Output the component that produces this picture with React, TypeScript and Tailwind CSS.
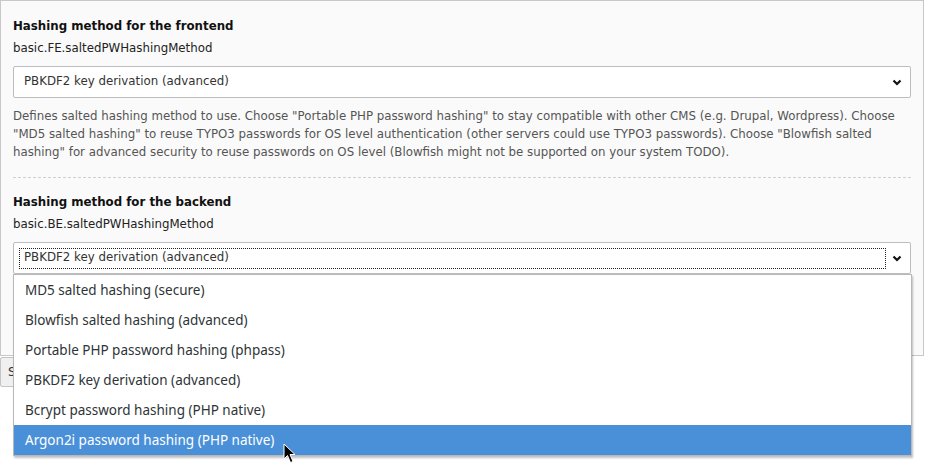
import React from "react";

const options = [
  "MD5 salted hashing (secure)",
  "Blowfish salted hashing (advanced)",
  "Portable PHP password hashing (phpass)",
  "PBKDF2 key derivation (advanced)",
  "Bcrypt password hashing (PHP native)",
  "Argon2i password hashing (PHP native)",
];

function Chevron() {
  return (
    <svg width="10" height="7" viewBox="0 0 10 7" className="shrink-0">
      <polyline points="1.5,1.5 5,5 8.5,1.5" fill="none" stroke="#111" strokeWidth="2.2" />
    </svg>
  );
}

function SelectBox({ focused }: { focused?: boolean }) {
  return (
    <div className="flex h-[32px] items-center justify-between rounded-[2px] border border-[#bdbdbd] bg-white pl-[6px] pr-[8px]">
      <div
        className={
          "flex h-[19px] flex-1 items-center pl-[4px] text-[11.8px] text-[#333] " +
          (focused ? "mr-[7px] outline-1 outline-dotted outline-[#222]" : "")
        }
      >
        PBKDF2 key derivation (advanced)
      </div>
      <Chevron />
    </div>
  );
}

function Field({ title, path, focused }: { title: string; path: string; focused?: boolean }) {
  return (
    <div>
      <h3 className="text-[11.8px] font-bold leading-[20px] text-[#111]">{title}</h3>
      <div className="mt-[3px] text-[11.8px] leading-[18px] text-[#222]">{path}</div>
      <div className="mt-[9px]">
        <SelectBox focused={focused} />
      </div>
    </div>
  );
}

export default function App() {
  return (
    <div className="relative h-[467px] w-[925px] overflow-hidden bg-white [font-family:'DejaVu_Sans',Verdana,sans-serif]">
      <div className="h-[356px] w-[924px] border border-[#c8c8c8] bg-[#fafafa] px-[12px] pt-[15px]">
        <div className="border-b border-dashed border-[#cfcfcf] pb-[16px]">
          <Field title="Hashing method for the frontend" path="basic.FE.saltedPWHashingMethod" />
          <p className="mt-[9px] text-[11.8px] leading-[18px] text-[#555]">
            Defines salted hashing method to use. Choose "Portable PHP password hashing" to stay compatible with other CMS (e.g. Drupal, Wordpress). Choose "MD5 salted hashing" to reuse TYPO3 passwords for OS level authentication (other servers could use TYPO3 passwords). Choose "Blowfish salted hashing" for advanced security to reuse passwords on OS level (Blowfish might not be supported on your system TODO).
          </p>
        </div>
        <div className="pt-[14px]">
          <Field title="Hashing method for the backend" path="basic.BE.saltedPWHashingMethod" focused />
        </div>
      </div>

      <button className="mt-[1px] h-[30px] rounded-[2px] border border-[#c4c4c4] bg-[#f0f0f0] px-[7px] text-[12px] text-[#333]">
        Save
      </button>

      {/* open dropdown list */}
      <div className="absolute left-[13px] top-[274px] w-[899px] border border-[#b8b8b8] bg-white shadow-[1px_2px_2px_rgba(0,0,0,0.25)] [font-family:'Noto_Sans',sans-serif]">
        {options.map((o, i) => (
          <div
            key={o}
            className={
              "flex h-[30px] items-center pl-[11px] text-[13.5px] " +
              (i === options.length - 1 ? "bg-[#4a90d9] text-white" : "text-[#2e3436]")
            }
          >
            {o}
          </div>
        ))}
      </div>

      {/* mouse pointer */}
      <svg className="absolute left-[283px] top-[443px]" width="14" height="22" viewBox="0 0 14 22">
        <path d="M1 1 L1 16 L4.5 12.5 L7.5 19.5 L10 18.5 L7 11.5 L12 11.5 Z" fill="#000" stroke="#fff" strokeWidth="1" strokeLinejoin="round" />
      </svg>
    </div>
  );
}
